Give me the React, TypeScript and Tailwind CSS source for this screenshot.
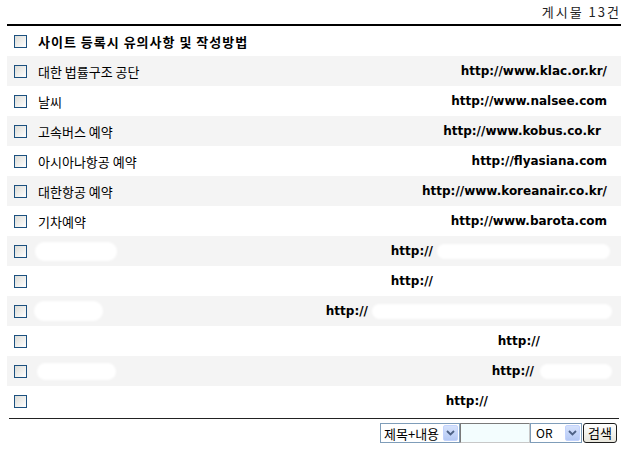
import React from "react";

type Row = {
  title?: string;
  bold?: boolean;
  url?: string;
  pr?: number;
  titleBlob?: { w: number; h: number; ml: number };
  tail?: { w: number; blob: boolean; gap: number };
};

const rows: Row[] = [
  { title: "사이트 등록시 유의사항 및 작성방법", bold: true },
  { title: "대한 법률구조 공단", url: "http://www.klac.or.kr/", pr: 14 },
  { title: "날씨", url: "http://www.nalsee.com", pr: 14 },
  { title: "고속버스 예약", url: "http://www.kobus.co.kr", pr: 20 },
  { title: "아시아나항공 예약", url: "http://flyasiana.com", pr: 14 },
  { title: "대한항공 예약", url: "http://www.koreanair.co.kr/", pr: 14 },
  { title: "기차예약", url: "http://www.barota.com", pr: 14 },
  { titleBlob: { w: 82, h: 19, ml: 8 }, url: "http://", pr: 11, tail: { w: 173, blob: true, gap: 4 } },
  { url: "http://", pr: 11, tail: { w: 177, blob: false, gap: 0 } },
  { titleBlob: { w: 69, h: 20, ml: 7 }, url: "http://", pr: 9, tail: { w: 240, blob: true, gap: 4 } },
  { url: "http://", pr: 11, tail: { w: 70, blob: false, gap: 0 } },
  { titleBlob: { w: 79, h: 17, ml: 10 }, url: "http://", pr: 9, tail: { w: 72, blob: true, gap: 6 } },
  { url: "http://", pr: 11, tail: { w: 122, blob: false, gap: 0 } },
];

function Checkbox() {
  return (
    <div className="w-[13px] h-[13px] shrink-0 border border-[#1c5180] bg-linear-to-br from-[#dcdcd7] to-[#ffffff]" />
  );
}

function Arrow() {
  return (
    <div className="w-[15px] h-[16px] flex items-center justify-center bg-linear-to-b from-[#d6e2fc] to-[#b5c9f5] border border-[#c3d3fd] rounded-[2px]">
      <svg width="9" height="6" viewBox="0 0 9 6">
        <path d="M1 1 L4.5 4.5 L8 1" fill="none" stroke="#4d6185" strokeWidth="1.8" />
      </svg>
    </div>
  );
}

export default function App() {
  return (
    <div className="w-[631px] h-[455px] bg-white text-black font-['Noto_Sans_CJK_KR','Noto_Sans',sans-serif]">
      <div className="h-[24px] flex items-center justify-end pr-[10px] text-[13px] text-[#222] tracking-[2px]">
        게시물 13건
      </div>
      <div className="ml-[7px] w-[614px] h-[2px] bg-black" />
      <div className="ml-[7px] w-[614px] flex flex-col">
        {rows.map((r, i) => (
          <div
            key={i}
            className={
              "h-[30px] flex items-center " + (i % 2 === 1 ? "bg-[#f4f4f4]" : "bg-white")
            }
          >
            <div className="ml-[7px]">
              <Checkbox />
            </div>
            {r.title ? (
              <div
                className={
                  "ml-[11px] text-[13px] leading-none whitespace-nowrap " +
                  (r.bold ? "font-bold tracking-[1px]" : "")
                }
              >
                {r.title}
              </div>
            ) : r.titleBlob ? (
              <div
                className="bg-white rounded-full blur-[1px]"
                style={{ width: r.titleBlob.w, height: r.titleBlob.h, marginLeft: r.titleBlob.ml }}
              />
            ) : null}
            {r.url ? (
              <div
                className="flex-1 flex items-center justify-end"
                style={{ paddingRight: r.pr }}
              >
                <span className="font-['DejaVu_Sans',sans-serif] font-bold text-[12px] leading-none whitespace-nowrap">
                  {r.url}
                </span>
                {r.tail ? (
                  <div
                    className={r.tail.blob ? "bg-white rounded-full h-[15px] blur-[1px]" : "h-[15px]"}
                    style={{ width: r.tail.w, marginLeft: r.tail.gap }}
                  />
                ) : null}
              </div>
            ) : null}
          </div>
        ))}
      </div>
      <div className="mt-[2px] ml-[9px] w-[610px] h-[1px] bg-[#222]" />
      <div className="mt-[4px] flex justify-end pr-[14px]">
        <div className="flex items-center h-[20px]">
          <div className="w-[80px] h-[20px] border border-[#7f9db9] bg-white flex items-center justify-between pl-[3px] pr-[1px] text-[13px]">
            <span className="leading-none">제목+내용</span>
            <Arrow />
          </div>
          <div className="w-[70px] h-[20px] border border-[#7a7a7a] border-r-[#c8c8c8] border-b-[#c8c8c8] bg-[#f3fdfe]" />
          <div className="w-[52px] h-[20px] border border-[#7f9db9] bg-white flex items-center justify-between pl-[5px] pr-[1px] text-[12px]">
            <span className="leading-none">OR</span>
            <Arrow />
          </div>
          <div className="ml-[1px] w-[34px] h-[20px] border border-[#1c1c1c] rounded-[3px] bg-linear-to-b from-[#ffffff] to-[#e8e6dc] flex items-center justify-center text-[13px]">
            검색
          </div>
        </div>
      </div>
    </div>
  );
}
